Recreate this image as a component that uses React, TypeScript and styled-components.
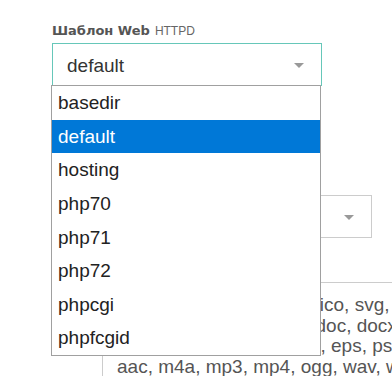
import React from "react";
import styled, { createGlobalStyle } from "styled-components";

const GlobalStyle = createGlobalStyle`
  body {
    margin: 0;
    overflow: hidden;
    background: #fff;
    font-family: "Liberation Sans", Arial, sans-serif;
  }
`;

const Page = styled.div`
  padding: 23px 0 0 52px;
  width: 420px;
`;

const Field = styled.div<{ $indent?: number; $top?: number }>`
  width: 270px;
  margin-left: ${p => p.$indent || 0}px;
  margin-top: ${p => p.$top || 0}px;
`;

const Label = styled.div`
  font-family: "DejaVu Sans", Verdana, sans-serif;
  font-weight: bold;
  font-size: 13px;
  line-height: 16px;
  color: #555;
  margin-bottom: 4px;
  white-space: nowrap;
`;

const Hint = styled.span`
  font-family: "Liberation Sans", Arial, sans-serif;
  font-weight: normal;
  font-size: 12px;
  color: #666;
  margin-left: 5px;
`;

const SelectWrap = styled.div`
  position: relative;
`;

const SelectBox = styled.div<{ $focused?: boolean }>`
  position: relative;
  box-sizing: border-box;
  height: 43px;
  padding: 2px 0 0 14px;
  line-height: 39px;
  font-size: 19px;
  color: #333;
  border: 1px solid ${p => (p.$focused ? "#66c7b9" : "#ccc")};
  background: #fff;
`;

const Caret = styled.span`
  position: absolute;
  right: 17px;
  top: 19px;
  width: 0;
  height: 0;
  border-left: 5px solid transparent;
  border-right: 5px solid transparent;
  border-top: 5px solid #999;
`;

const Menu = styled.ul`
  position: absolute;
  z-index: 10;
  left: -1px;
  top: 42px;
  width: 270px;
  box-sizing: border-box;
  margin: 0;
  padding: 0;
  list-style: none;
  background: #fff;
  border: 1px solid #a0a0a0;
`;

const Option = styled.li<{ $active?: boolean }>`
  height: 33.625px;
  line-height: 33.625px;
  padding-left: 6px;
  font-size: 19px;
  color: ${p => (p.$active ? "#fff" : "#222")};
  background: ${p => (p.$active ? "#0078d7" : "transparent")};
`;

const TextArea = styled.div`
  box-sizing: border-box;
  width: 340px;
  height: 120px;
  padding: 12px 0 0 14px;
  border-top: 1px solid #ccc;
  border-left: 1px solid #ccc;
  font-size: 19px;
  line-height: 20.7px;
  color: #555;
  overflow: hidden;
`;

const Line = styled.div`
  white-space: nowrap;
`;

const options = [
  "basedir",
  "default",
  "hosting",
  "php70",
  "php71",
  "php72",
  "phpcgi",
  "phpfcgid"
];

const extensions = [
  "jpg, jpeg, png, gif, bmp, ico, svg, webp,",
  "pdf, rtf, odt, ods, ai, 7z, doc, docx, xlsx,",
  "psd, jp2, cdr, tiff, raw, txt, eps, ps, ttf,",
  "aac, m4a, mp3, mp4, ogg, wav, wma, flac"
];

export default function App() {
  const selected = "default";
  return (
    <>
      <GlobalStyle />
      <Page>
        <Field>
          <Label>
            Шаблон Web<Hint>HTTPD</Hint>
          </Label>
          <SelectWrap>
            <SelectBox $focused>
              {selected}
              <Caret />
            </SelectBox>
            <Menu>
              {options.map(o => (
                <Option key={o} $active={o === selected}>
                  {o}
                </Option>
              ))}
            </Menu>
          </SelectWrap>
        </Field>
        <Field $indent={50} $top={89}>
          <Label>Версия PHP</Label>
          <SelectBox>
            <Caret />
          </SelectBox>
        </Field>
        <Field $indent={50} $top={24}>
          <Label>Статика</Label>
          <TextArea>
            {extensions.map(l => (
              <Line key={l}>{l}</Line>
            ))}
          </TextArea>
        </Field>
      </Page>
    </>
  );
}
